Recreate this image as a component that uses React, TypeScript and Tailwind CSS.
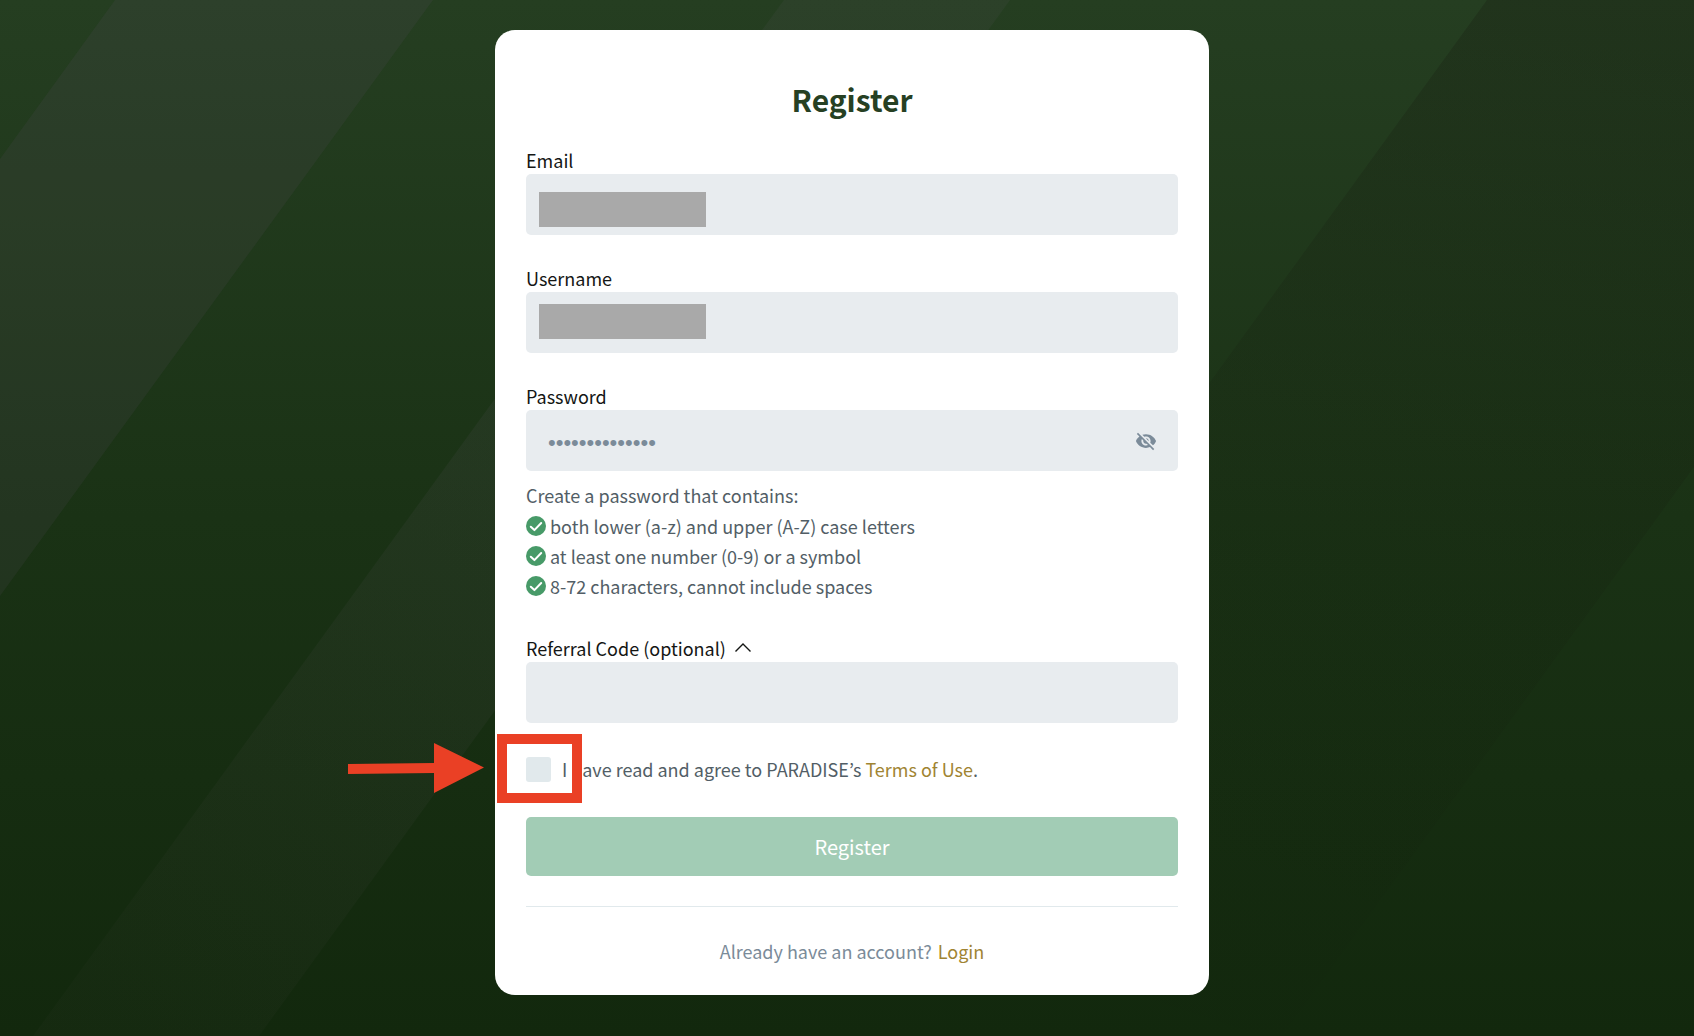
import { useState } from "react";
import { MdVisibilityOff } from "react-icons/md";

const rules = [
  "both lower (a-z) and upper (A-Z) case letters",
  "at least one number (0-9) or a symbol",
  "8-72 characters, cannot include spaces",
];

const fieldClass =
  "block h-[61px] w-full rounded-[5px] bg-[#e8ecef] px-[22px] text-[#7b8b99] outline-none";
const labelClass = "block h-[26px] text-lg leading-6 text-[#141614]";

function Backdrop() {
  return (
    <svg
      className="absolute inset-0 h-full w-full"
      viewBox="0 0 1694 1036"
      preserveAspectRatio="none"
      aria-hidden="true"
    >
      <defs>
        <linearGradient id="base" x1="0" y1="0" x2="0" y2="1">
          <stop offset="0" stopColor="#253e21" />
          <stop offset="0.5" stopColor="#1a3215" />
          <stop offset="1" stopColor="#12280d" />
        </linearGradient>
        <linearGradient id="light" gradientUnits="userSpaceOnUse" x1="900" y1="0" x2="150" y2="1036">
          <stop offset="0" stopColor="#6a5a70" stopOpacity="0.1" />
          <stop offset="0.5" stopColor="#6a5a70" stopOpacity="0.11" />
          <stop offset="1" stopColor="#6a5a60" stopOpacity="0.04" />
        </linearGradient>
        <linearGradient id="dark" gradientUnits="userSpaceOnUse" x1="1550" y1="0" x2="1200" y2="1036">
          <stop offset="0" stopColor="#100a08" stopOpacity="0.2" />
          <stop offset="0.5" stopColor="#100a08" stopOpacity="0.08" />
          <stop offset="1" stopColor="#100a08" stopOpacity="0.01" />
        </linearGradient>
      </defs>
      <path d="M0 0H1694V1036H0Z" fill="url(#base)" />
      <path d="M115 0H433L0 596V159Z" fill="#6f5070" fillOpacity="0.12" />
      <path d="M784 0H1010L259 1036H33Z" fill="url(#light)" />
      <path d="M1487 0H1694V467L1282 1036H736Z" fill="url(#dark)" />
    </svg>
  );
}

function CheckCircle() {
  return (
    <svg className="size-5 shrink-0" viewBox="0 0 20 20" aria-hidden="true">
      <circle cx="10" cy="10" r="10" fill="#479a68" />
      <path
        d="M4.8 10.7 8.4 14.1 15.2 7"
        fill="none"
        stroke="#fff"
        strokeWidth="2"
        strokeLinecap="round"
        strokeLinejoin="round"
      />
    </svg>
  );
}

export default function App() {
  const [agreed, setAgreed] = useState(false);

  return (
    <div className="relative flex min-h-screen justify-center overflow-hidden bg-[#12280d] pt-[30px] pb-10 pl-[10px] font-['Noto_Sans_CJK_KR','Noto_Sans',sans-serif]">
      <Backdrop />
      <main className="relative w-full max-w-[714px] self-start rounded-[20px] bg-white px-[31px] pt-[45px] pb-[30px]">
        <h1 className="text-center text-[30px] leading-12 font-bold text-[#264023]">Register</h1>

        <form className="pt-[25px]" onSubmit={(e) => e.preventDefault()}>
          <label htmlFor="email" className={labelClass}>
            Email
          </label>
          <div className="relative">
            <input id="email" type="email" className={`${fieldClass} text-lg`} />
            <span className="absolute top-[18px] left-[13px] h-[35px] w-[167px] bg-[#a9a9a9]" />
          </div>

          <label htmlFor="username" className={`${labelClass} mt-[31px]`}>
            Username
          </label>
          <div className="relative">
            <input id="username" type="text" className={`${fieldClass} text-lg`} />
            <span className="absolute top-3 left-[13px] h-[35px] w-[167px] bg-[#a9a9a9]" />
          </div>

          <label htmlFor="password" className={`${labelClass} mt-[31px]`}>
            Password
          </label>
          <div className="relative">
            <input
              id="password"
              type="password"
              defaultValue="Paradise-2023x"
              className={`${fieldClass} pt-1 font-['Liberation_Sans',sans-serif] text-[22px]`}
            />
            <button
              type="button"
              aria-label="Show password"
              className="absolute inset-y-0 right-[21px] flex items-center text-[#7b8b99]"
            >
              <MdVisibilityOff className="size-[22px]" />
            </button>
          </div>

          <div className="mt-[9px] text-lg text-[#525e66]">
            <p className="leading-[31px]">Create a password that contains:</p>
            <ul>
              {rules.map((rule) => (
                <li key={rule} className="flex items-center gap-1 leading-[30px]">
                  <CheckCircle />
                  {rule}
                </li>
              ))}
            </ul>
          </div>

          <div className="mt-[35px] flex h-[26px] items-center gap-2">
            <label htmlFor="referral" className={labelClass}>
              Referral Code (optional)
            </label>
            <button type="button" aria-label="Collapse referral code">
              <svg className="h-5 w-[18px]" viewBox="0 0 18 20" aria-hidden="true">
                <path d="M1.5 12.500 9 5 16.500 12.500" fill="none" stroke="#141614" strokeWidth="1.4" />
              </svg>
            </button>
          </div>
          <input id="referral" type="text" className={`${fieldClass} text-lg`} />

          <div className="relative mt-8 flex h-7 items-center gap-[11px] text-lg text-[#525e66]">
            <input
              id="terms"
              type="checkbox"
              checked={agreed}
              onChange={(e) => setAgreed(e.target.checked)}
              className="size-[25px] shrink-0 appearance-none rounded-[3px] bg-[#e1e9ec] checked:bg-[#479a68]"
            />
            <label htmlFor="terms" className="whitespace-nowrap">
              I have read and agree to PARADISE’s{" "}
              <a href="#terms" className="text-[#a08432]">
                Terms of Use
              </a>
              .
            </label>
            <span className="pointer-events-none absolute -top-[21px] -left-[29px] h-[69px] w-[85px] border-10 border-[#ea4025]" />
            <svg
              className="pointer-events-none absolute -top-3 right-full mr-[42px] h-[50px] w-[136px]"
              viewBox="0 0 136 50"
              aria-hidden="true"
            >
              <path d="M0 21 86 20V0L136 24.500 86 50V30L0 31Z" fill="#ea4025" />
            </svg>
          </div>

          <button
            type="submit"
            className="mt-[34px] block h-[59px] w-full rounded-[5px] bg-[#a2ccb5] pt-px text-xl text-white"
          >
            Register
          </button>
        </form>

        <p className="mt-[30px] border-t border-[#e1e9ec] pt-[30px] text-center text-lg leading-[28px] text-[#7b8b99]">
          Already have an account?{" "}
          <a href="#login" className="ml-0.5 text-[#a08432]">
            Login
          </a>
        </p>
      </main>
    </div>
  );
}
